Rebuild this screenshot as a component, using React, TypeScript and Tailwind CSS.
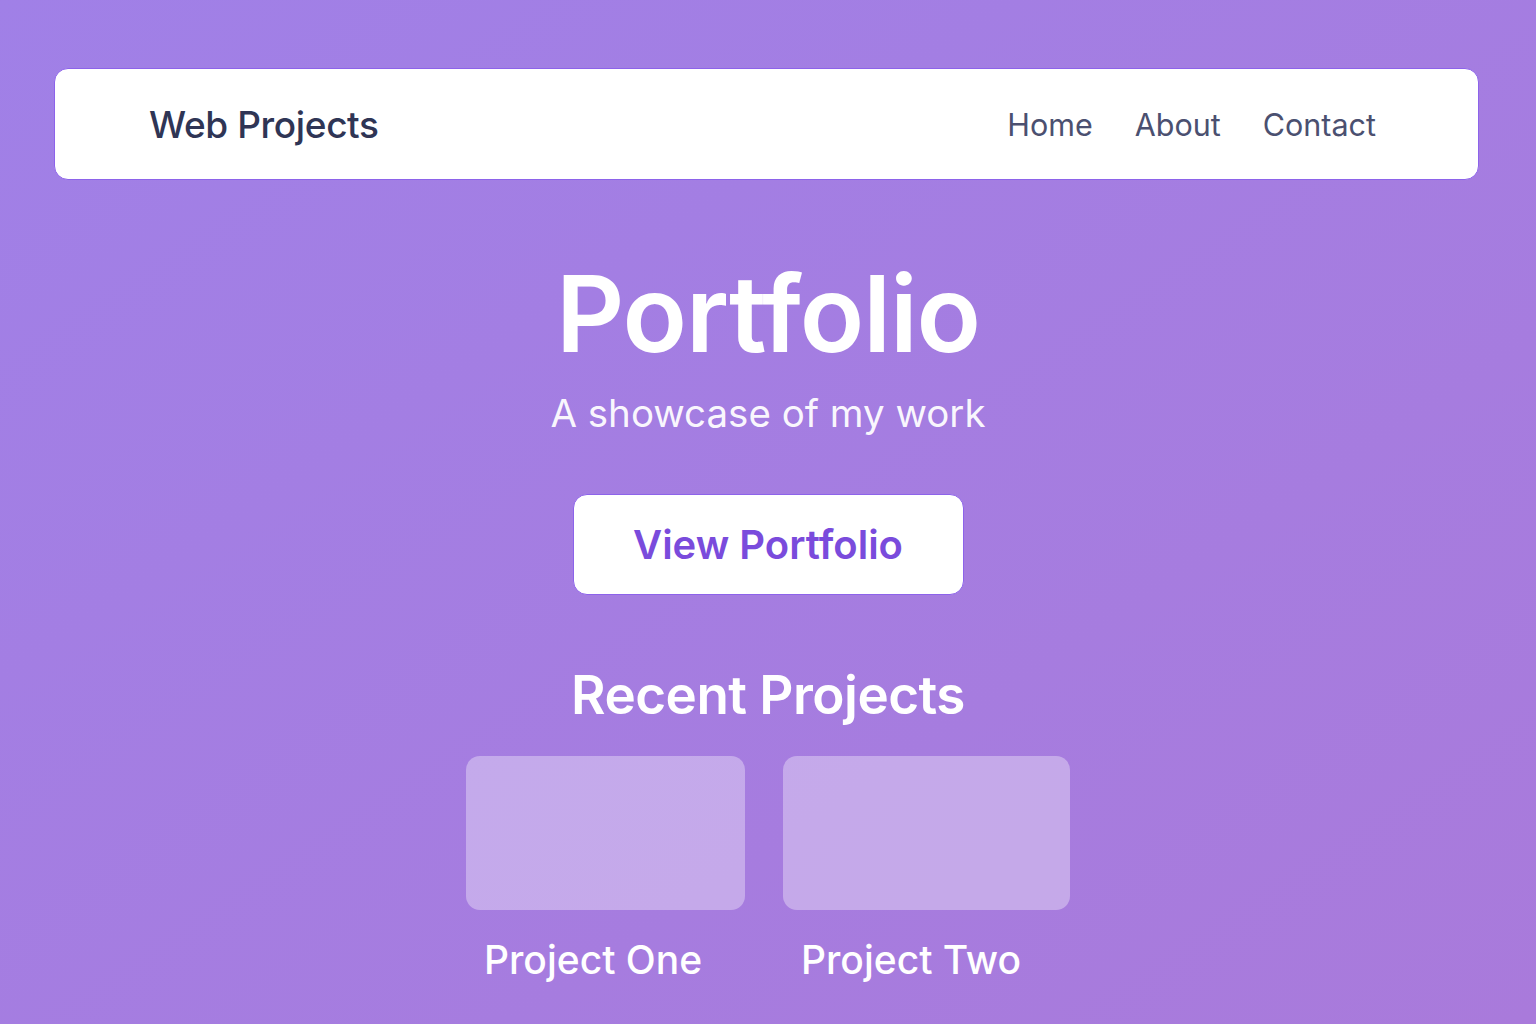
export default function App() {
  const projects = ["Project One", "Project Two"];

  return (
    <div
      className="min-h-screen w-full bg-gradient-to-br from-[#a080e7] to-[#a97adb] pl-[54px] pr-[57px] pt-[68px] pb-10"
      style={{ fontFamily: "Inter, 'Noto Sans', sans-serif" }}
    >
      {/* Top nav */}
      <nav className="flex h-[112px] items-center justify-between rounded-[14px] border border-[#8d63ea] bg-white pl-[94px] pr-[102px]">
        <span className="pt-[2px] text-[37px] font-medium tracking-[-0.01em] text-[#2f3555]">
          Web Projects
        </span>
        <div className="flex items-center gap-[42px] pt-[2px] text-[30.5px] text-[#4b5070]">
          <a>Home</a>
          <a>About</a>
          <a>Contact</a>
        </div>
      </nav>

      {/* Hero */}
      <section className="flex flex-col items-center pl-[3px] pt-[74px] text-white">
        <h1 className="text-[106px] font-semibold leading-[120px] tracking-[-0.01em]">
          Portfolio
        </h1>
        <p className="mt-[15px] text-[38.5px] leading-[48px] text-white/95">
          A showcase of my work
        </p>
        <button className="mt-[57px] flex h-[101px] w-[391px] items-center justify-center rounded-[14px] border border-[#8d63ea] bg-white text-[40px] font-semibold text-[#7a4bdc]">
          View Portfolio
        </button>

        <h2 className="mt-[64px] text-[53px] font-semibold leading-[72px] tracking-[-0.01em]">
          Recent Projects
        </h2>

        <div className="mt-[25px] flex gap-[38px]">
          {projects.map((p, i) => (
            <div key={p} className="flex flex-col">
              <div
                className={`h-[154px] rounded-[14px] bg-white/35 ${
                  i === 0 ? "w-[279px]" : "w-[287px]"
                }`}
              />
              <span className="mt-[26px] pl-[18px] text-[39px] font-medium leading-[48px]">
                {p}
              </span>
            </div>
          ))}
        </div>
      </section>
    </div>
  );
}
